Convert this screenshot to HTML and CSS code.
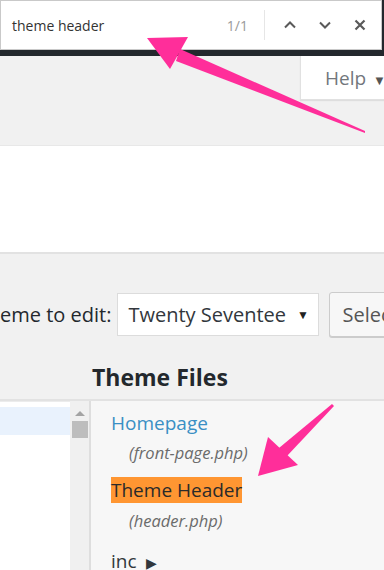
FILE: index.html
```html
<!DOCTYPE html>
<html>
<head>
<meta charset="utf-8">
<link rel="stylesheet" href="styles.css">
</head>
<body>
<div class="page">
  <div class="topbar">
    <div class="findbar">
      <span class="query">theme header</span>
      <span class="count">1/1</span>
      <span class="sep"></span>
      <svg class="ico" width="16" height="16" viewBox="0 0 16 16"><path d="M3 10.5 L8 5.5 L13 10.5" fill="none" stroke="#5a5a5a" stroke-width="2"/></svg>
      <svg class="ico" width="16" height="16" viewBox="0 0 16 16"><path d="M3 5.5 L8 10.5 L13 5.5" fill="none" stroke="#5a5a5a" stroke-width="2"/></svg>
      <svg class="ico" width="16" height="16" viewBox="0 0 16 16"><path d="M3.5 3.5 L12.5 12.5 M12.5 3.5 L3.5 12.5" fill="none" stroke="#5a5a5a" stroke-width="2.2"/></svg>
    </div>
  </div>
  <div class="helprow">
    <div class="helptab">Help <span class="caret">▼</span></div>
  </div>
  <div class="notice"></div>
  <div class="themerow">
    <span class="label">eme to edit:</span>
    <div class="select">Twenty Seventee <span class="dd">▼</span></div>
    <div class="button">Select</div>
  </div>
  <h2 class="files-title">Theme Files</h2>
  <div class="editor">
    <div class="code">
      <div class="code-line"></div>
    </div>
    <div class="scroll">
      <span class="up"></span>
      <span class="thumb"></span>
    </div>
    <div class="filelist">
      <div class="file">
        <a class="name link">Homepage</a>
        <span class="path">(front-page.php)</span>
      </div>
      <div class="file">
        <a class="name hit">Theme Header</a>
        <span class="path">(header.php)</span>
      </div>
      <div class="folder">inc <span class="tri">▶</span></div>
    </div>
  </div>
  <svg class="arrows" width="384" height="570" viewBox="0 0 384 570">
    <polygon points="180,49 365,131 365,133 176,61" fill="#ff2e9a"/>
    <polygon points="147,38 188,37 170,69" fill="#ff2e9a"/>
    <polygon points="332,404 334,406 287,456 279,448" fill="#ff2e9a"/>
    <polygon points="258,476 268,437 298,465" fill="#ff2e9a"/>
  </svg>
</div>
</body>
</html>
```
FILE: styles.css
```css
html, body {
  margin: 0;
  padding: 0;
}
body {
  background: #f1f1f1;
  font-family: "Open Sans", "Noto Sans", sans-serif;
  color: #23282d;
  overflow: hidden;
  width: 384px;
  height: 570px;
}
.page {
  position: relative;
  width: 384px;
  height: 570px;
  overflow: hidden;
}
.topbar {
  background: #23282d;
  padding: 0 2px 6px 0;
}
.findbar {
  height: 48px;
  background: #fff;
  border: 1px solid #c9c9c9;
  display: flex;
  align-items: center;
  padding: 0 0 0 11px;
}
.query {
  font-size: 14px;
  color: #333;
  flex: 1;
}
.count {
  font-size: 14px;
  color: #9a9a9a;
  margin-right: 16px;
}
.sep {
  width: 1px;
  height: 30px;
  background: #e6e6e6;
  margin-right: 17px;
}
.ico {
  margin-right: 19px;
}
.ico:last-child {
  margin-right: 13px;
}
.helprow {
  display: flex;
  justify-content: flex-end;
}
.helptab {
  width: 96px;
  height: 44px;
  margin-right: -12px;
  background: #fff;
  border: 1px solid #e1e1e1;
  border-top: none;
  box-shadow: 0 1px 1px rgba(0,0,0,0.08);
  box-sizing: border-box;
  padding-left: 24px;
  font-size: 19px;
  line-height: 44px;
  color: #72777c;
  white-space: nowrap;
}
.caret {
  font-size: 13px;
  color: #555;
  margin-left: 2px;
}
.notice {
  margin-top: 45px;
  height: 106px;
  background: #fff;
  border-top: 1px solid #e8e8e8;
  border-bottom: 2px solid #e2e2e2;
}
.themerow {
  margin-top: 37px;
  display: flex;
  align-items: center;
  height: 46px;
  white-space: nowrap;
}
.label {
  font-size: 20px;
  font-weight: 400;
  color: #23282d;
  margin-right: 6px;
  flex-shrink: 0;
}
.select {
  flex-shrink: 0;
  width: 202px;
  height: 43px;
  box-sizing: border-box;
  background: #fff;
  border: 1px solid #dcdcdc;
  font-size: 20px;
  line-height: 41px;
  padding-left: 10px;
  color: #32373c;
  white-space: nowrap;
  overflow: hidden;
  display: flex;
}
.dd {
  font-size: 12px;
  margin-left: 11px;
  color: #222;
}
.button {
  flex-shrink: 0;
  margin-left: 10px;
  height: 45px;
  padding: 0 20px 0 12px;
  box-sizing: border-box;
  border: 1px solid #cccccc;
  border-radius: 3px;
  background: #f7f7f7;
  box-shadow: 0 1px 0 #ccc;
  font-size: 20px;
  line-height: 43px;
  color: #555;
  white-space: nowrap;
}
.files-title {
  margin: 25px 0 0 92px;
  font-size: 23px;
  font-weight: 700;
  line-height: 30px;
  height: 30px;
  color: #23282d;
}
.editor {
  margin-top: 7px;
  display: flex;
  border-top: 2px solid #e2e2e2;
  height: 200px;
}
.code {
  width: 70px;
  background: #fff;
  border-top: 1px solid #ececec;
  padding-top: 5px;
}
.code-line {
  height: 28px;
  background: #e9f2fd;
}
.scroll {
  width: 19px;
  background: #f0f0f0;
  display: flex;
  flex-direction: column;
  align-items: center;
  padding-top: 10px;
}
.up {
  width: 0;
  height: 0;
  border-left: 5px solid transparent;
  border-right: 5px solid transparent;
  border-bottom: 5px solid #a3a3a3;
}
.thumb {
  margin-top: 5px;
  width: 16px;
  height: 17px;
  background: #bdbdbd;
}
.filelist {
  flex: 1;
  background: #f7f7f7;
  border-left: 2px solid #dedede;
  padding: 9px 0 0 20px;
}
.file {
  display: flex;
  flex-direction: column;
  align-items: flex-start;
}
.name {
  font-size: 19px;
  line-height: 26px;
}
.link {
  color: #3a8fc4;
}
.hit {
  background: #ff9632;
  color: #2a2a2a;
  margin-top: 14px;
}
.path {
  font-size: 16.5px;
  font-style: italic;
  color: #6b6b6b;
  margin: 7px 0 0 18px;
  line-height: 20px;
}
.file + .file .path {
  margin-top: 8px;
}
.folder {
  margin-top: 17px;
  font-size: 19px;
  line-height: 26px;
  color: #32373c;
}
.tri {
  font-size: 14px;
  margin-left: 4px;
  color: #32373c;
}
.arrows {
  position: absolute;
  left: 0;
  top: 0;
  pointer-events: none;
}
```
